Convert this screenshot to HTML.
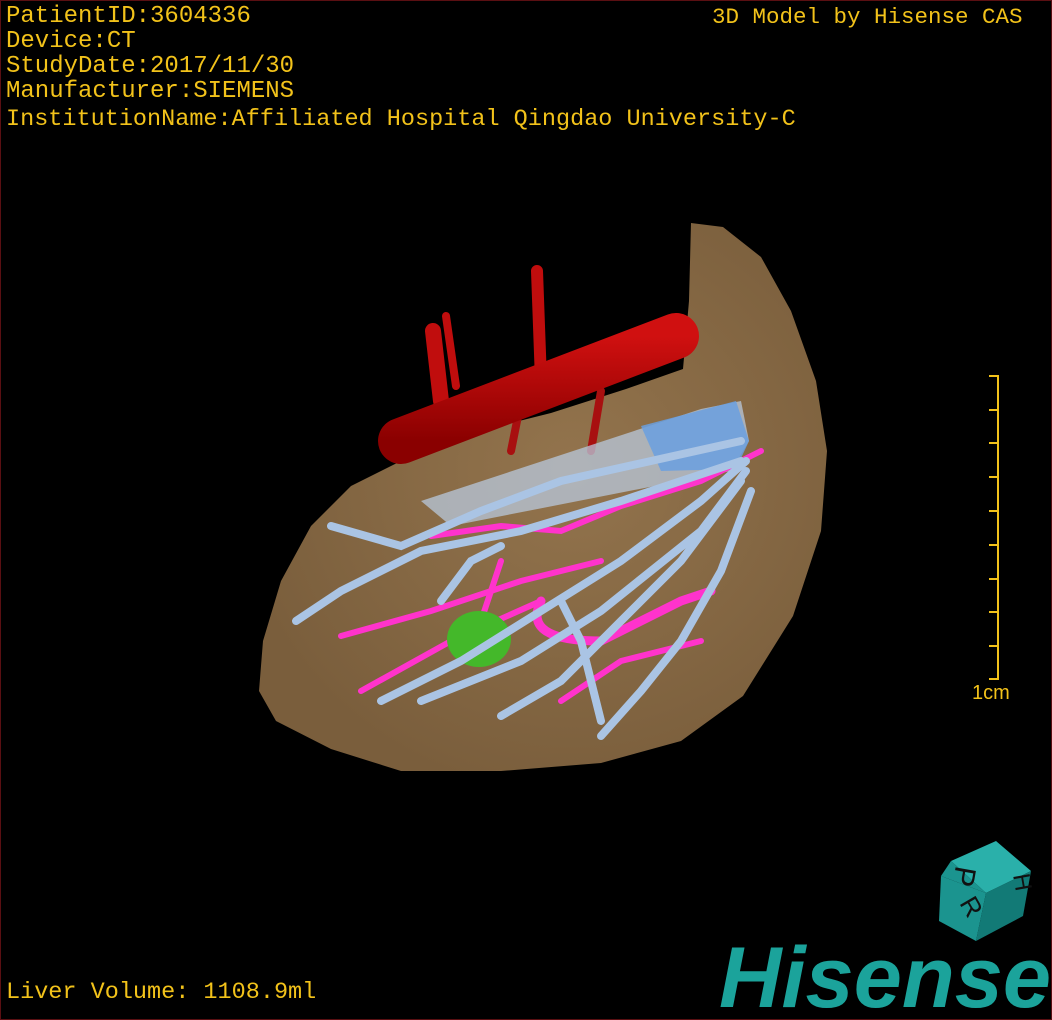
<!DOCTYPE html>
<html><head><meta charset="utf-8"><style>
html,body{margin:0;padding:0;background:#000;}
#v{position:relative;width:1050px;height:1018px;border:1px solid #5a0f12;overflow:hidden;background:#000;}
.t{position:absolute;font-family:"Liberation Mono",monospace;color:#f2c21a;font-size:24px;line-height:25px;white-space:pre;}
</style></head><body><div id="v">
<svg width="1050" height="1018" style="position:absolute;left:0;top:0">
<defs>
<radialGradient id="lv" cx="0.55" cy="0.45" r="0.6"><stop offset="0" stop-color="#93744d"/><stop offset="1" stop-color="#7a5e3c"/></radialGradient>
<linearGradient id="rd" x1="0" y1="0" x2="0" y2="1"><stop offset="0" stop-color="#d01010"/><stop offset="1" stop-color="#8a0000"/></linearGradient>
</defs>
<path d="M690,222 L722,226 L760,256 L790,310 L815,380 L826,450 L820,530 L792,615 L742,695 L680,740 L600,762 L500,770 L400,770 L330,748 L275,720 L258,690 L262,640 L280,580 L310,525 L350,485 L400,460 L470,432 L550,412 L625,388 L682,368 L688,300 Z" fill="url(#lv)"/>
<g stroke="#c00d0d" stroke-linecap="round" fill="none">
<path d="M440,400 L432,330" stroke-width="16"/>
<path d="M455,385 L445,315" stroke-width="8"/>
<path d="M540,380 L536,270" stroke-width="12"/>
<path d="M600,390 L590,450" stroke-width="8" stroke="#a81010"/>
<path d="M520,400 L510,450" stroke-width="8" stroke="#a81010"/>
<path d="M400,440 L675,335" stroke="url(#rd)" stroke-width="46"/>
</g>
<path d="M420,500 L700,408 L740,400 L748,440 L730,470 L450,525 Z" fill="#b8c8dc" opacity="0.75"/>
<path d="M640,425 L735,400 L748,440 L735,468 L660,470 Z" fill="#6aa0e0" opacity="0.85"/>
<g stroke="#ff33cc" stroke-linecap="round" fill="none" stroke-width="6">
<path d="M430,535 L500,525 L560,530 L620,505 L700,480 L760,450"/>
<path d="M340,635 L430,610 L520,580 L600,560"/>
<path d="M360,690 L450,640 L540,600"/>
<path d="M540,600 Q520,640 600,640 L680,600 L710,590" stroke-width="9"/>
<path d="M560,700 L620,660 L700,640"/>
<path d="M500,560 L470,650"/>
</g>
<ellipse cx="478" cy="638" rx="32" ry="28" fill="#44b82a"/>
<g stroke="#aac4e4" stroke-linecap="round" fill="none" stroke-width="8">
<path d="M330,525 L400,545 L480,510 L560,480 L650,460 L740,440"/>
<path d="M295,620 L340,590 L420,550 L520,530 L620,500 L740,460"/>
<path d="M380,700 L460,660 L540,610 L620,560 L700,500 L745,460"/>
<path d="M420,700 L520,660 L600,610 L700,530 L745,470"/>
<path d="M500,715 L560,680 L620,620 L680,560 L740,480"/>
<path d="M600,735 L640,690 L680,640 L720,570 L750,490"/>
<path d="M560,600 L580,640 L600,720"/>
<path d="M440,600 L470,560 L500,545"/>
</g>
<!-- cube -->
<polygon points="950,860 995,840 1030,870 985,892" fill="#2ab0aa"/>
<polygon points="940,875 985,892 975,940 938,920" fill="#1b948f"/>
<polygon points="985,892 1030,870 1022,915 975,940" fill="#127a76"/>
<polygon points="940,875 950,860 985,892" fill="#1b948f"/>
<text x="955" y="864" font-family="Liberation Sans,sans-serif" font-size="30" fill="#111" transform="rotate(100 955 864)">P</text>
<text x="1012" y="874" font-family="Liberation Sans,sans-serif" font-size="24" fill="#111" transform="rotate(80 1012 874)">H</text>
<text x="958" y="902" font-family="Liberation Sans,sans-serif" font-size="26" fill="#111" transform="rotate(60 958 902)">R</text>
<!-- scale -->
<g stroke="#f2c21a" stroke-width="2">
<line x1="997" y1="375" x2="997" y2="679"/>
<line x1="988" y1="375" x2="998" y2="375"/><line x1="988" y1="409" x2="998" y2="409"/><line x1="988" y1="442" x2="998" y2="442"/><line x1="988" y1="476" x2="998" y2="476"/><line x1="988" y1="510" x2="998" y2="510"/><line x1="988" y1="544" x2="998" y2="544"/><line x1="988" y1="578" x2="998" y2="578"/><line x1="988" y1="611" x2="998" y2="611"/><line x1="988" y1="645" x2="998" y2="645"/><line x1="988" y1="678" x2="998" y2="678"/>
</g>
<text x="971" y="698" font-family="Liberation Sans,sans-serif" font-size="20" fill="#f2c21a">1cm</text>
<text x="718" y="1006" font-family="Liberation Sans,sans-serif" font-weight="bold" font-style="italic" font-size="86" fill="#1ba39b" textLength="332" lengthAdjust="spacingAndGlyphs">Hisense</text>
</svg>
<div class="t" style="left:5px;top:3px">PatientID:3604336
Device:CT
StudyDate:2017/11/30
Manufacturer:SIEMENS</div>
<div class="t" style="left:5px;top:106px;font-size:23.5px">InstitutionName:Affiliated Hospital Qingdao University-C</div>
<div class="t" style="left:711px;top:4px;font-size:22.5px">3D Model by Hisense CAS</div>
<div class="t" style="left:5px;top:979px;font-size:23.5px">Liver Volume: 1108.9ml</div>
</div></body></html>
